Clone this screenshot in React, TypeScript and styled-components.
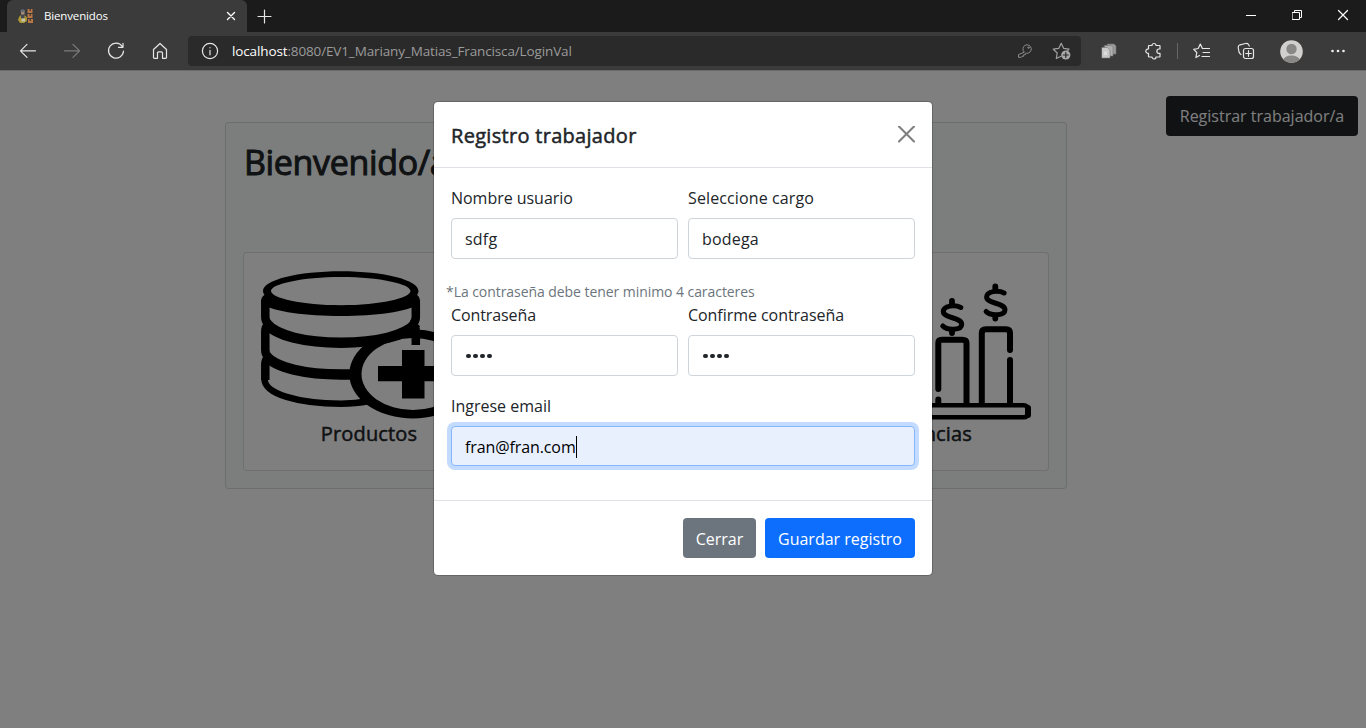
import React from 'react';
import styled, { createGlobalStyle } from 'styled-components';

const GlobalStyle = createGlobalStyle`
  * { box-sizing: border-box; }
  html, body, #root { height: 100%; }
  body {
    margin: 0;
    overflow: hidden;
    background: #fff;
    color: #212529;
    font-family: "Open Sans", "Noto Sans", sans-serif;
    font-size: 16px;
  }
  h1, h5, p { margin: 0; }
`;

const Screen = styled.div`
  display: flex;
  flex-direction: column;
  height: 728px;
`;

/* ---------- browser frame ---------- */

const TitleBar = styled.div`
  display: flex;
  flex: none;
  height: 32px;
  padding-left: 7px;
  background: #1b1b1b;
`;

const Tab = styled.div`
  display: flex;
  align-items: center;
  width: 240px;
  height: 32px;
  padding: 0 10px 0 11px;
  border-radius: 6px 6px 0 0;
  background: #3b3b3b;
`;

const TabTitle = styled.span`
  flex: 1;
  margin: -2px 0 0 10px;
  color: #fff;
  font-size: 11.5px;
  letter-spacing: -0.15px;
`;

const NewTab = styled.div`
  display: flex;
  align-items: center;
  justify-content: center;
  width: 35px;
`;

const WindowButtons = styled.div`
  display: flex;
  height: 29px;
  margin-left: auto;
`;

const WindowButton = styled.div`
  display: flex;
  align-items: center;
  justify-content: center;
  width: 46px;
`;

const Toolbar = styled.div`
  display: flex;
  align-items: center;
  flex: none;
  height: 39px;
  padding: 0 6px;
  border-bottom: 1px solid #6a6a6a;
  background: #3b3b3b;
`;

const Tool = styled.div<{ $before?: number }>`
  display: flex;
  align-items: center;
  justify-content: center;
  width: 44px;
  height: 38px;
  margin-left: ${(p) => p.$before ?? 0}px;
`;

const Address = styled.div`
  display: flex;
  align-items: center;
  width: 893px;
  height: 30px;
  margin: 0 6px;
  padding: 0 9px 0 13px;
  border-radius: 4px;
  background: #2a2a2a;
`;

const Url = styled.span`
  flex: 1;
  margin-left: 13px;
  color: #9b9b9b;
  font-size: 13.5px;
  letter-spacing: -0.13px;
  b { color: #fff; font-weight: 400; }
`;

const AddressIcon = styled.div`
  display: flex;
  margin-left: 19px;
`;

const Separator = styled.div`
  width: 1px;
  height: 16px;
  margin: 0 2px 0 1px;
  background: #666;
`;

/* ---------- page ---------- */

const Page = styled.main`
  position: relative;
  flex: 1;
  overflow: hidden;
  padding: 25px 8px 0;
`;

const TopActions = styled.div`
  display: flex;
  justify-content: flex-end;
  height: 26px;
`;

const Button = styled.button<{ $bg: string; $w: number; $drop?: number }>`
  flex: none;
  width: ${(p) => p.$w}px;
  height: 40px;
  padding: ${(p) => p.$drop ?? 0}px 0 1px;
  border: 0;
  border-radius: 4px;
  background: ${(p) => p.$bg};
  color: #fff;
  font: 400 16px "Open Sans", sans-serif;
  white-space: nowrap;
`;

const WelcomeCard = styled.section`
  width: 842px;
  height: 367px;
  margin: 0 auto 0 217px;
  padding: 17px;
  border: 1px solid rgba(0, 0, 0, 0.125);
  border-radius: 4px;
  background: #f8fdfa;
`;

const WelcomeTitle = styled.h1`
  height: 112px;
  padding-left: 1px;
  font-size: 34px;
  font-weight: 400;
  line-height: 44px;
  letter-spacing: -0.35px;
  -webkit-text-stroke: 1px currentColor;
`;

const CardRow = styled.div`
  display: flex;
  justify-content: space-between;
`;

const OptionCard = styled.article`
  display: flex;
  flex-direction: column;
  align-items: center;
  width: 252px;
  height: 219px;
  padding-top: 17px;
  border: 1px solid rgba(0, 0, 0, 0.125);
  border-radius: 4px;
  background: #fff;
`;

const OptionTitle = styled.h5`
  font-size: 20px;
  font-weight: 400;
  line-height: 26px;
  letter-spacing: 0.15px;
  -webkit-text-stroke: 0.5px currentColor;
`;

const Backdrop = styled.div`
  position: absolute;
  inset: 0;
  display: flex;
  align-items: flex-start;
  justify-content: center;
  padding-top: 30px;
  background: rgba(0, 0, 0, 0.5);
`;

/* ---------- dialog ---------- */

const Dialog = styled.div`
  width: 500px;
  height: 475px;
  border: 1px solid rgba(0, 0, 0, 0.2);
  border-radius: 5px;
  background: #fff;
  background-clip: padding-box;
`;

const DialogHeader = styled.header`
  display: flex;
  align-items: center;
  justify-content: space-between;
  height: 66px;
  padding: 0 17px;
  border-bottom: 1px solid #dee2e6;
`;

const DialogTitle = styled.h5`
  padding-top: 2px;
  font-size: 20px;
  font-weight: 400;
  letter-spacing: 0.3px;
  -webkit-text-stroke: 0.5px currentColor;
`;

const DialogBody = styled.div`
  height: 332px;
  padding: 17px;
`;

const FieldRow = styled.div`
  display: flex;
  gap: 10px;
`;

const Field = styled.label`
  display: flex;
  flex: 1;
  flex-direction: column;
`;

const Label = styled.span<{ $ls?: number }>`
  height: 25px;
  margin-bottom: 8px;
  font-size: 16px;
  line-height: 27px;
  letter-spacing: ${(p) => p.$ls ?? -0.03}px;
`;

const Input = styled.div<{ $focused?: boolean }>`
  display: flex;
  align-items: center;
  height: ${(p) => (p.$focused ? 40 : 41)}px;
  padding: ${(p) => (p.$focused ? 1 : 0)}px 13px 0;
  border: 1px solid ${(p) => (p.$focused ? '#86b7fe' : '#ced4da')};
  border-radius: 4px;
  background: ${(p) => (p.$focused ? '#e8f0fe' : '#fff')};
  box-shadow: ${(p) => (p.$focused ? '0 0 0 4px rgba(13, 110, 253, 0.25)' : 'none')};
  color: ${(p) => (p.$focused ? '#000' : '#212529')};
  font-size: 16px;
  letter-spacing: ${(p) => (p.$focused ? -0.1 : 0.2)}px;
`;

const Dots = styled.span`
  display: flex;
  gap: 2.4px;
  padding: 1px 0 0 1px;
  i {
    width: 4.6px;
    height: 4.6px;
    border-radius: 50%;
    background: #212529;
  }
`;

const Caret = styled.span`
  width: 1px;
  height: 22px;
  background: #000;
`;

const Hint = styled.p`
  height: 21px;
  margin: 22px 0 0 -5px;
  color: #6c757d;
  font-size: 14px;
  line-height: 21px;
  letter-spacing: -0.06px;
`;

const EmailRow = styled(FieldRow)`
  margin-top: 17px;
`;

const DialogFooter = styled.footer`
  display: flex;
  align-items: flex-start;
  justify-content: flex-end;
  gap: 9px;
  padding: 17px;
  border-top: 1px solid #dee2e6;
`;

/* ---------- drawings ---------- */

const Glyph = ({ w = 20, h = 20, color = '#e6e6e6', sw = 1.2, children }: {
  w?: number; h?: number; color?: string; sw?: number; children: React.ReactNode;
}) => (
  <svg width={w} height={h} viewBox={`0 0 ${w} ${h}`} fill="none" stroke={color}
    strokeWidth={sw} strokeLinecap="round" strokeLinejoin="round">{children}</svg>
);

const Favicon = () => (
  <svg width="16" height="16" viewBox="0 0 16 16">
    <path d="M2.500 2.500Q4.500 0 7 2.500V4H2.500z" fill="#666d78" />
    <rect x="3" y="4" width="3.500" height="3" fill="#a58b70" />
    <path d="M1 9Q2 7 4.500 7Q8 7 9 10L9 13L6 15H2L0 12z" fill="#ad9734" />
    <path d="M3 6.500h3.500v4H3z" fill="#424854" />
    <rect x="3.500" y="10.500" width="3.500" height="3" fill="#c5c2ad" />
    <path d="M9.500 1h5v4h-5zM9.500 6h5v4h-5zM10 11h5v4h-5z" fill="#b87745" />
    <path d="M11.500 1h1.500v2h-1.500zM11.500 6h1.500v2h-1.500zM11.500 11h1.500v2h-1.500z" fill="#594032" />
  </svg>
);

const CoinsPicture = () => (
  <svg width="216" height="151" viewBox="261 270 216 151" fill="none" stroke="#000">
    <path fill="#000" stroke="none" fillRule="evenodd"
      d="M263 291C263 280 298 271.300 341 271.300S418.500 280 418.500 291Q418.500 293 417 295C420 297 420 300 420 304C406 312 376 316 341 316S275 312 261 304C261 300 261 297 264.500 295Q263 293 263 291ZM271 291C271 298 302 305.200 341 305.200S410.500 298 410.500 291S380 277 341 277S271 284 271 291Z" />
    <g strokeWidth="8.500">
      <path d="M265.300 300V317Q265.300 321 268 324M415.800 300V317Q415.800 321 413 324" />
      <path d="M268 325Q265.300 327 265.300 332V350Q265.300 354 268 357M413 325Q415.800 327 415.800 332V345" />
      <path d="M268 358Q265.300 360 265.300 365V380" />
    </g>
    <path d="M264.500 379C264.500 394 298 403.700 341 403.700Q356 403.700 369 401" strokeWidth="6.500" />
    <g strokeWidth="10.500">
      <path d="M266 323C276 336 306 342.700 341 342.700S406 336 416 323" />
      <path d="M266 356C276 368 306 374.500 341 374.500H354" />
    </g>
    <path fill="#000" stroke="none" fillRule="evenodd"
      d="M349.300 374A63.700 44.500 0 1 0 476.700 374A63.700 44.500 0 1 0 349.300 374ZM361.500 374A51.500 36 0 1 1 464.500 374A51.500 36 0 1 1 361.500 374Z" />
    <path d="M378 366H402V350H424.500V366H449V381.300H424.500V398.500H402V381.300H378Z" fill="#000" stroke="none" />
  </svg>
);

const Dollar = ({ x, y }: { x: number; y: number }) => (
  <g transform={`translate(${x} ${y})`} strokeWidth="5" strokeLinecap="round">
    <path d="M0 -16V-13M0 13.500V16" strokeWidth="5.800" />
    <path d="M8.800 -9.500C3 -12.500 -8.500 -11.500 -8.700 -5.500C-8.700 1.500 9.700 0 9.700 7.200C9.700 13.500 -5 13.500 -9.200 9" />
  </g>
);

const BarsPicture = () => (
  <svg width="216" height="151" viewBox="815 270 216 151" fill="none" stroke="#000"
    strokeWidth="6" strokeLinecap="round" strokeLinejoin="round">
    <rect x="818" y="405.300" width="210" height="12" rx="4" strokeWidth="4.600" />
    <path d="M1028 408V415" />
    <path d="M938.300 389V343Q938.300 339.700 942 339.700H962Q966.500 339.700 966.500 343V404M938.300 399.500V404" />
    <path d="M981.800 404V333Q981.800 329.200 986 329.200H1006Q1010 329.200 1010 333V350M1010 360V404" />
    <path d="M894 404V358Q894 354 898 354H918Q922 354 922 358V404" />
    <Dollar x={952} y={317} />
    <Dollar x={995.300} y={302.500} />
  </svg>
);

const BoxesPicture = () => (
  <svg width="216" height="151" viewBox="0 0 216 151" fill="none" stroke="#000" strokeWidth="8">
    <path d="M30 40L108 10L186 40V112L108 142L30 112zM30 40L108 68L186 40M108 68V142" />
  </svg>
);

/* ---------- view ---------- */

const options = [
  { title: 'Productos', picture: <CoinsPicture /> },
  { title: 'Ventas', picture: <BoxesPicture /> },
  { title: 'Ganancias', picture: <BarsPicture /> },
];

const PasswordDots = () => (
  <Dots><i /><i /><i /><i /></Dots>
);

const BrowserFrame = () => (
  <>
    <TitleBar>
      <Tab>
        <Favicon />
        <TabTitle>Bienvenidos</TabTitle>
        <Glyph w={12} h={12} color="#fff" sw={1.4}><path d="M2.500 2.500L9.500 9.500M9.500 2.500L2.500 9.500" /></Glyph>
      </Tab>
      <NewTab>
        <Glyph w={15} h={15}><path d="M7.500 1V14M1 7.500H14" /></Glyph>
      </NewTab>
      <WindowButtons>
        <WindowButton><Glyph w={10} h={10} color="#fff" sw={1}><path d="M0 5.500H10" /></Glyph></WindowButton>
        <WindowButton>
          <Glyph w={10} h={10} color="#fff" sw={1}><path d="M.5 2.500H7.500V9.500H.5zM2.500 2.500V.5H9.500V7.500H7.500" /></Glyph>
        </WindowButton>
        <WindowButton><Glyph w={12} h={12} color="#fff" sw={1.2}><path d="M1.500 1.500L10.500 10.500M10.500 1.500L1.500 10.500" /></Glyph></WindowButton>
      </WindowButtons>
    </TitleBar>
    <Toolbar>
      <Tool><Glyph><path d="M17.500 9.800H2.500M9 3.300L2.500 9.800L9 16.300" /></Glyph></Tool>
      <Tool><Glyph color="#7c7c7c"><path d="M2.500 9.800H17.500M11 3.300L17.500 9.800L11 16.300" /></Glyph></Tool>
      <Tool><Glyph><path d="M16.300 5.500A7.500 7.500 0 1 0 17.500 10M17 2.300V6.300H12.500" /></Glyph></Tool>
      <Tool>
        <Glyph><path d="M3.500 8.500L10 2.500L16.500 8.500V16.500Q16.500 17.300 15.700 17.300H12.500V12Q12.500 10.800 11.300 10.800H8.700Q7.500 10.800 7.500 12V17.300H4.300Q3.500 17.300 3.500 16.500z" /></Glyph>
      </Tool>
      <Address>
        <Glyph w={18} h={18}><circle cx="9" cy="9" r="7.600" /><path d="M9 8.300V12.800M9 5.700V5.800" /></Glyph>
        <Url><b>localhost</b>:8080/EV1_Mariany_Matias_Francisca/LoginVal</Url>
        <AddressIcon>
          <Glyph w={16} h={16} color="#8c8c8c" sw={1}>
            <path d="M7 8.900A4.200 4.200 0 1 1 9.600 10.200L8.300 10.400V11.800H6.600V13.300H5L4.300 14.300H1.500V12z" />
            <circle cx="11.400" cy="4.700" r=".7" />
          </Glyph>
        </AddressIcon>
        <AddressIcon>
          <Glyph w={20} h={20} color="#a0a0a0" sw={1.2}>
            <path d="M9 15.200L4.300 17.500L5.200 12L1.300 8.200L6.700 7.400L9.200 2.300L11.700 7.400L17 8.200L15.500 9.800" />
            <circle cx="13.800" cy="14" r="4.600" fill="#a9a9a9" stroke="none" />
            <path d="M13.800 11.500V16.500M11.300 14H16.300" stroke="#2a2a2a" />
          </Glyph>
        </AddressIcon>
      </Address>
      <Tool>
        <Glyph w={18} h={18} sw={0.6} color="#777">
          <path d="M7.500 2H14L16 4V12H7.500z" fill="#999" />
          <path d="M4.500 3.500H11L13 5.500V14H4.500z" fill="#b0b0b0" />
          <path d="M2 5.500H7.500L10 8V16H2z" fill="#c9c9c9" />
          <path d="M4 9.500H7V13H4z" fill="#ddd" stroke="none" />
        </Glyph>
      </Tool>
      <Tool $before={1}>
        <Glyph>
          <path d="M5 4.500H8A2 2 0 1 1 12 4.500H15.500Q16 4.500 16 5V8H15A2 2 0 1 0 15 12.300H16V15.500Q16 16 15.500 16H12A2 2 0 1 1 8 16H5Q4.500 16 4.500 15.500V12.300A2.200 2.200 0 1 1 4.500 8V5Q4.500 4.500 5 4.500z" />
        </Glyph>
      </Tool>
      <Separator />
      <Tool>
        <Glyph>
          <path d="M7.500 14.500L3.900 16.500L4.800 11.500L1.700 8.300L6.200 7.500L8.300 3L10.400 7.500H17.500M11 11.500H17.500M10 15.500H17.500" />
        </Glyph>
      </Tool>
      <Tool>
        <Glyph>
          <rect x="7.500" y="7.500" width="10" height="10" rx="2" />
          <path d="M12.500 9.700V15.300M9.700 12.500H15.300M5 13.500Q3.500 12.500 3 11L2.200 6.500Q2 4.500 4 3.800L9.500 2.500Q11.500 2 12.500 3.500L13.300 5" />
        </Glyph>
      </Tool>
      <Tool $before={1}>
        <svg width="23" height="23" viewBox="0 0 23 23">
          <clipPath id="avatar"><circle cx="11.500" cy="11.500" r="11.300" /></clipPath>
          <g clipPath="url(#avatar)">
            <rect width="23" height="23" fill="#d2d0ce" />
            <circle cx="11.500" cy="9" r="5.200" fill="#8a8886" />
            <ellipse cx="11.500" cy="20.500" rx="8.300" ry="5" fill="#8a8886" />
          </g>
        </svg>
      </Tool>
      <Tool $before={3}>
        <svg width="16" height="4" viewBox="0 0 16 4" fill="#f0f0f0">
          <circle cx="2.500" cy="2" r="1.300" /><circle cx="8" cy="2" r="1.300" /><circle cx="13.500" cy="2" r="1.300" />
        </svg>
      </Tool>
    </Toolbar>
  </>
);

const RegisterDialog = () => (
  <Dialog role="dialog">
    <DialogHeader>
      <DialogTitle>Registro trabajador</DialogTitle>
      <Glyph w={17} h={17} color="#7f7f7f" sw={2.1}><path d="M1 .5L16 15.500M16 .5L1 15.500" /></Glyph>
    </DialogHeader>
    <DialogBody>
      <FieldRow>
        <Field><Label>Nombre usuario</Label><Input>sdfg</Input></Field>
        <Field><Label $ls={0.12}>Seleccione cargo</Label><Input>bodega</Input></Field>
      </FieldRow>
      <Hint>*La contraseña debe tener minimo 4 caracteres</Hint>
      <FieldRow>
        <Field><Label $ls={-0.1}>Contraseña</Label><Input><PasswordDots /></Input></Field>
        <Field><Label $ls={-0.05}>Confirme contraseña</Label><Input><PasswordDots /></Input></Field>
      </FieldRow>
      <EmailRow>
        <Field><Label $ls={0}>Ingrese email</Label><Input $focused>fran@fran.com<Caret /></Input></Field>
      </EmailRow>
    </DialogBody>
    <DialogFooter>
      <Button $bg="#6c757d" $w={73} $drop={2}>Cerrar</Button>
      <Button $bg="#0d6efd" $w={150} $drop={2}>Guardar registro</Button>
    </DialogFooter>
  </Dialog>
);

export default function App() {
  return (
    <Screen>
      <GlobalStyle />
      <BrowserFrame />
      <Page>
        <TopActions>
          <Button $bg="#212529" $w={192}>Registrar trabajador/a</Button>
        </TopActions>
        <WelcomeCard>
          <WelcomeTitle>Bienvenido/a</WelcomeTitle>
          <CardRow>
            {options.map((o) => (
              <OptionCard key={o.title}>
                {o.picture}
                <OptionTitle>{o.title}</OptionTitle>
              </OptionCard>
            ))}
          </CardRow>
        </WelcomeCard>
        <Backdrop><RegisterDialog /></Backdrop>
      </Page>
    </Screen>
  );
}
